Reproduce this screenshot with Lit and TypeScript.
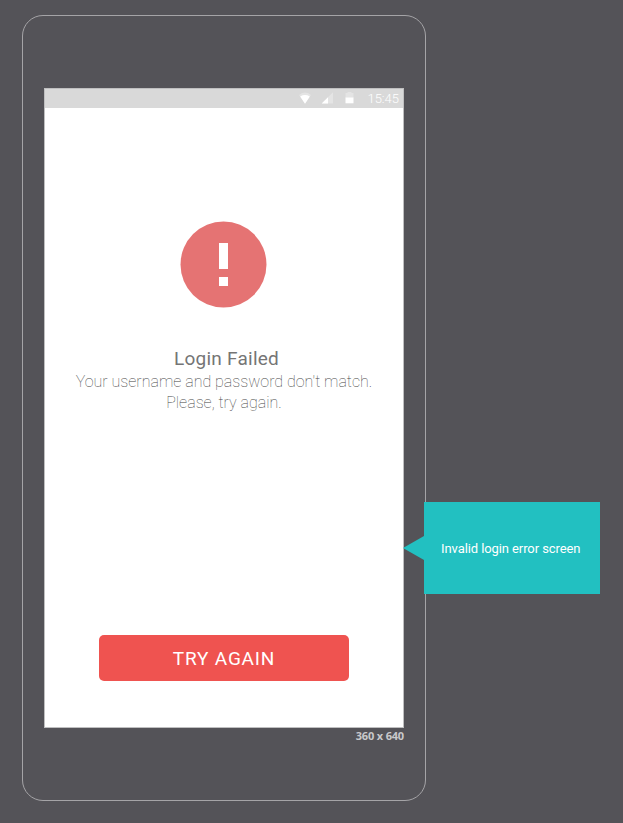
import { LitElement, html, css } from "lit";
import { customElement, property } from "lit/decorators.js";

@customElement("status-bar")
class StatusBar extends LitElement {
  @property() time = "";
  static styles = css`
    :host { display: flex; height: 19px; box-sizing: border-box; align-items: center; justify-content: flex-end; background: #d9d9d9; color: #fff; padding-right: 4px; }
    svg { display: block; flex: none; }
    .time { width: 36px; text-align: right; font: 300 13px/19px Roboto, sans-serif; white-space: nowrap; }
  `;
  render() {
    return html`
      <svg width="64" height="19" viewBox="0 0 64 19" fill="#fff">
        <path d="M0 6Q6 1.2 12 6L6 14.8Z" opacity=".3"></path>
        <path d="M1.2 7.4Q6 4.8 10.8 7.4L6 14.8Z"></path>
        <path d="M34 3.3V14.5H22.7Z" opacity=".3"></path>
        <path d="M29 8.3V14.5H22.7Z"></path>
        <path d="M46.5 4h2V3h4v1h2v5h-8Z" opacity=".3"></path>
        <path d="M46.5 8.5h8V14.3h-8Z"></path>
      </svg>
      <span class="time">${this.time}</span>
    `;
  }
}

@customElement("note-callout")
class NoteCallout extends LitElement {
  static styles = css`
    :host { display: flex; align-items: center; }
    .arrow { width: 21px; height: 24px; background: #22c0c1; clip-path: polygon(0 50%, 100% 0, 100% 100%); }
    .box { width: 176px; height: 92px; box-sizing: border-box; padding-left: 17px; background: #22c0c1; color: #fff; font: 400 13px/93px Roboto, sans-serif; letter-spacing: -.09px; white-space: nowrap; }
  `;
  render() {
    return html`<div class="arrow"></div><div class="box"><slot></slot></div>`;
  }
}

@customElement("app-root")
class AppRoot extends LitElement {
  static styles = css`
    :host { display: block; position: relative; box-sizing: border-box; width: 623px; height: 823px; padding: 15px 0 0 22px; overflow: hidden; background: #545358; font-family: Roboto, sans-serif; }
    .device { width: 404px; height: 786px; box-sizing: border-box; border: 1px solid #a5a4a7; border-radius: 21px; padding: 72px 21px 0; }
    .screen { width: 360px; height: 640px; box-sizing: border-box; border: 1px solid #bfbfc0; background: #fff; display: flex; flex-direction: column; }
    .content { flex: 1; display: flex; flex-direction: column; align-items: center; padding: 113px 0 46px; }
    .alert { display: block; flex: none; margin-left: -1px; }
    h1 { margin: 40px 0 0; padding-left: 5px; font-weight: 400; font-size: 19px; line-height: 22px; letter-spacing: .25px; color: #757575; }
    p { margin: 1px 0 0; font-weight: 100; font-size: 16px; line-height: 21px; letter-spacing: .01px; text-align: center; color: #444; white-space: nowrap; }
    button { width: 250px; height: 46px; margin: auto 0 0; padding: 2px 0 0; border: 0; border-radius: 5px; background: #ef5350; color: #fff; font: 400 19px/44px Roboto, sans-serif; letter-spacing: .8px; }
    .size { text-align: right; font: 700 11px/15px "Open Sans", sans-serif; letter-spacing: -.17px; color: #c9c9cb; }
    note-callout { position: absolute; left: 403px; top: 502px; }
  `;
  render() {
    return html`
      <div class="device">
        <div class="screen">
          <status-bar time="15:45"></status-bar>
          <div class="content">
            <svg class="alert" width="87" height="87" viewBox="0 0 87 87">
              <circle cx="43.5" cy="43.5" r="43" fill="#e57373"></circle>
              <path fill="#fff" d="M39 22h9v26h-9zM39 56h9v9h-9z"></path>
            </svg>
            <h1>Login Failed</h1>
            <p>Your username and password don't match.<br />Please, try again.</p>
            <button>TRY AGAIN</button>
          </div>
        </div>
        <div class="size">360 x 640</div>
      </div>
      <note-callout>Invalid login error screen</note-callout>
    `;
  }
}
